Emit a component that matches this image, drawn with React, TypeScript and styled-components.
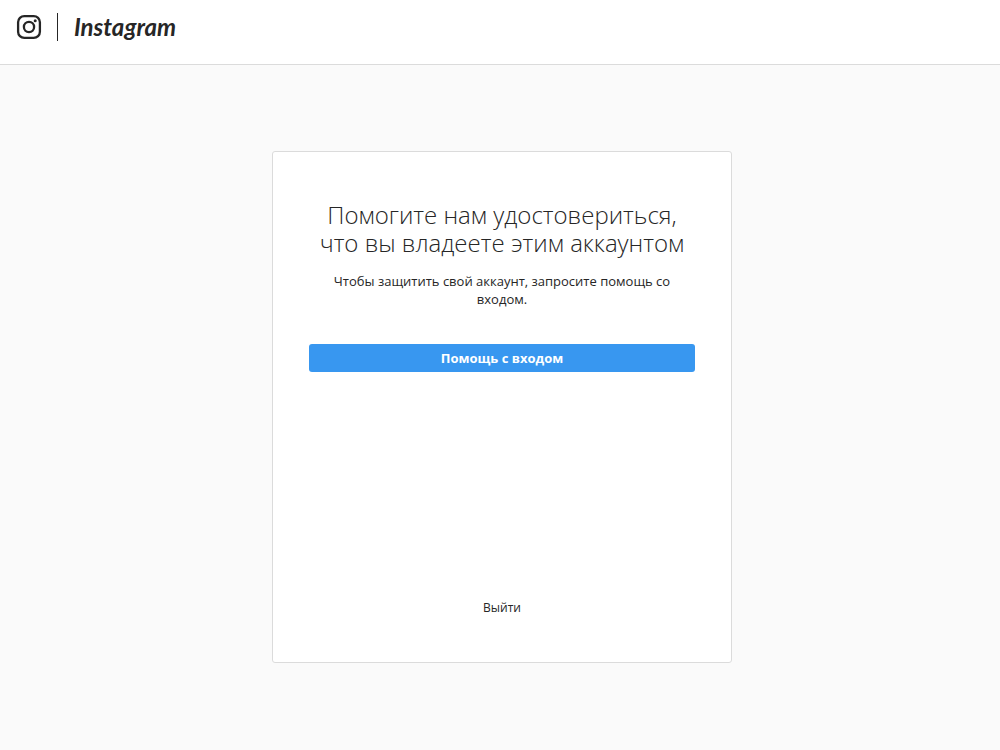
import React from "react";
import styled, { createGlobalStyle } from "styled-components";

const GlobalStyle = createGlobalStyle`
  *, *::before, *::after { box-sizing: border-box; }
  body {
    margin: 0;
    background: #fafafa;
    color: #262626;
    font-family: "Open Sans", "Noto Sans", sans-serif;
    font-size: 13px;
    line-height: 18px;
  }
`;

const Page = styled.div`
  min-height: 100vh;
  display: flex;
  flex-direction: column;
`;

const Header = styled.header`
  height: 65px;
  padding: 12px 16px 0;
  background: #fff;
  border-bottom: 1px solid #dbdbdb;
`;

const Brand = styled.a`
  display: inline-flex;
  align-items: center;
  height: 30px;
  color: #262626;
  text-decoration: none;
`;

const Glyph = styled.svg`
  display: block;
  width: 26px;
  height: 26px;
`;

const Divider = styled.span`
  width: 1px;
  height: 28px;
  margin: 0 16px 0 15px;
  background: #262626;
`;

const Wordmark = styled.span`
  font-family: Lato, sans-serif;
  font-size: 24px;
  font-style: italic;
  font-weight: 700;
  line-height: 30px;
`;

const Main = styled.main`
  flex: 1;
  display: flex;
  justify-content: center;
  align-items: flex-start;
  padding: 86px 20px 24px 24px;
`;

const Card = styled.section`
  display: flex;
  flex-direction: column;
  width: 100%;
  max-width: 460px;
  min-height: 512px;
  padding: 49px 36px 45px;
  background: #fff;
  border: 1px solid #dbdbdb;
  border-radius: 3px;
  text-align: center;
`;

const Title = styled.h1`
  margin: 0 0 15px;
  font-size: 24px;
  font-weight: 300;
  line-height: 28px;
`;

const Message = styled.p`
  margin: 0 0 36px;
  padding: 0 20px;
`;

const PrimaryButton = styled.button`
  height: 28px;
  padding: 0 8px;
  border: 0;
  border-radius: 3px;
  background: #3897f0;
  color: #fff;
  font: inherit;
  font-weight: 700;
  cursor: pointer;
`;

const LogoutButton = styled.button`
  align-self: center;
  margin-top: auto;
  padding: 0;
  border: 0;
  background: none;
  color: #262626;
  font: inherit;
  font-size: 12px;
  line-height: 18px;
  cursor: pointer;
`;

export default function App() {
  return (
    <Page>
      <GlobalStyle />
      <Header>
        <Brand href="/">
          <Glyph viewBox="0 0 26 26" fill="none" stroke="currentColor" strokeWidth="2.3" aria-hidden="true">
            <rect x="2.1" y="2.1" width="21.8" height="21.8" rx="6.2" />
            <circle cx="13" cy="13" r="5.1" />
            <circle cx="19.2" cy="6.8" r="1.5" fill="currentColor" stroke="none" />
          </Glyph>
          <Divider />
          <Wordmark>Instagram</Wordmark>
        </Brand>
      </Header>
      <Main>
        <Card>
          <Title>
            Помогите нам удостовериться, что вы владеете этим аккаунтом
          </Title>
          <Message>Чтобы защитить свой аккаунт, запросите помощь со входом.</Message>
          <PrimaryButton type="button">Помощь с входом</PrimaryButton>
          <LogoutButton type="button">Выйти</LogoutButton>
        </Card>
      </Main>
    </Page>
  );
}
